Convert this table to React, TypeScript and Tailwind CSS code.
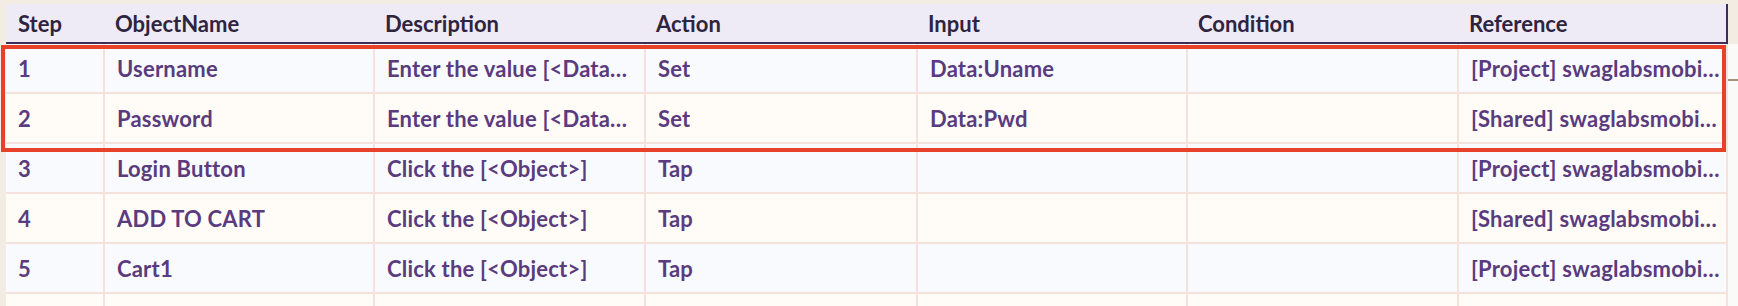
const columns = ["Step", "ObjectName", "Description", "Action", "Input", "Condition", "Reference"];

const steps = [
  {
    step: "1",
    object: "Username",
    description: "Enter the value [<Data>] in the field [<Object>]",
    action: "Set",
    input: "Data:Uname",
    condition: "",
    reference: "[Project] swaglabsmobile:Username",
  },
  {
    step: "2",
    object: "Password",
    description: "Enter the value [<Data>] in the field [<Object>]",
    action: "Set",
    input: "Data:Pwd",
    condition: "",
    reference: "[Shared] swaglabsmobile:Password",
  },
  {
    step: "3",
    object: "Login Button",
    description: "Click the [<Object>]",
    action: "Tap",
    input: "",
    condition: "",
    reference: "[Project] swaglabsmobile:LoginButton",
  },
  {
    step: "4",
    object: "ADD TO CART",
    description: "Click the [<Object>]",
    action: "Tap",
    input: "",
    condition: "",
    reference: "[Shared] swaglabsmobile:AddToCart",
  },
  {
    step: "5",
    object: "Cart1",
    description: "Click the [<Object>]",
    action: "Tap",
    input: "",
    condition: "",
    reference: "[Project] swaglabsmobile:Cart1",
  },
  { step: "", object: "", description: "", action: "", input: "", condition: "", reference: "" },
];

const gridCols = "grid grid-cols-[97px_270px_271px_272px_270px_271px_271px]";

const App = () => {
  return (
    <div
      className="relative w-[1738px] h-[306px] overflow-hidden bg-[#f3ece2] pt-[4px] pl-[6px] flex"
      style={{ fontFamily: "Lato, 'Open Sans', sans-serif" }}
    >
      <div className="w-[1722px] shrink-0">
        <div className={`${gridCols} h-[40px] bg-[#efebf6] border-b-2 border-r-2 border-[#3e2d58]`}>
          {columns.map((col) => (
            <div key={col} className="flex items-center px-[12px] text-[22px] font-bold text-[#2f2440]">
              {col}
            </div>
          ))}
        </div>

        {steps.map((row, i) => (
          <div
            key={i}
            className={`${gridCols} h-[50px] border-b-2 border-r-2 border-[#f5e2dc] ${
              i % 2 === 0 ? "bg-[#f9fafe]" : "bg-[#fffcf7]"
            }`}
          >
            {[row.step, row.object, row.description, row.action, row.input, row.condition, row.reference].map(
              (val, j) => (
                <div
                  key={j}
                  className={`flex items-center min-w-0 pl-[12px] text-[22px] font-bold tracking-[0.2px] text-[#5a3b7d] ${
                    j > 0 ? "border-l-2 border-[#f5e2dc]" : ""
                  } ${j === 6 ? "pr-[8px]" : "pr-[13px]"}`}
                >
                  <span className="truncate">{val}</span>
                </div>
              )
            )}
          </div>
        ))}
      </div>

      <div className="flex-1 mt-[40px] bg-[#fafaf8]">
        <div className="mt-[35px] h-[2px] bg-[#a09380]" />
      </div>

      {/* highlight around the first two steps */}
      <div className="absolute left-[1px] top-[45px] w-[1725px] h-[107px] border-4 border-[#e8412a] pointer-events-none" />
    </div>
  );
};

export default App;
